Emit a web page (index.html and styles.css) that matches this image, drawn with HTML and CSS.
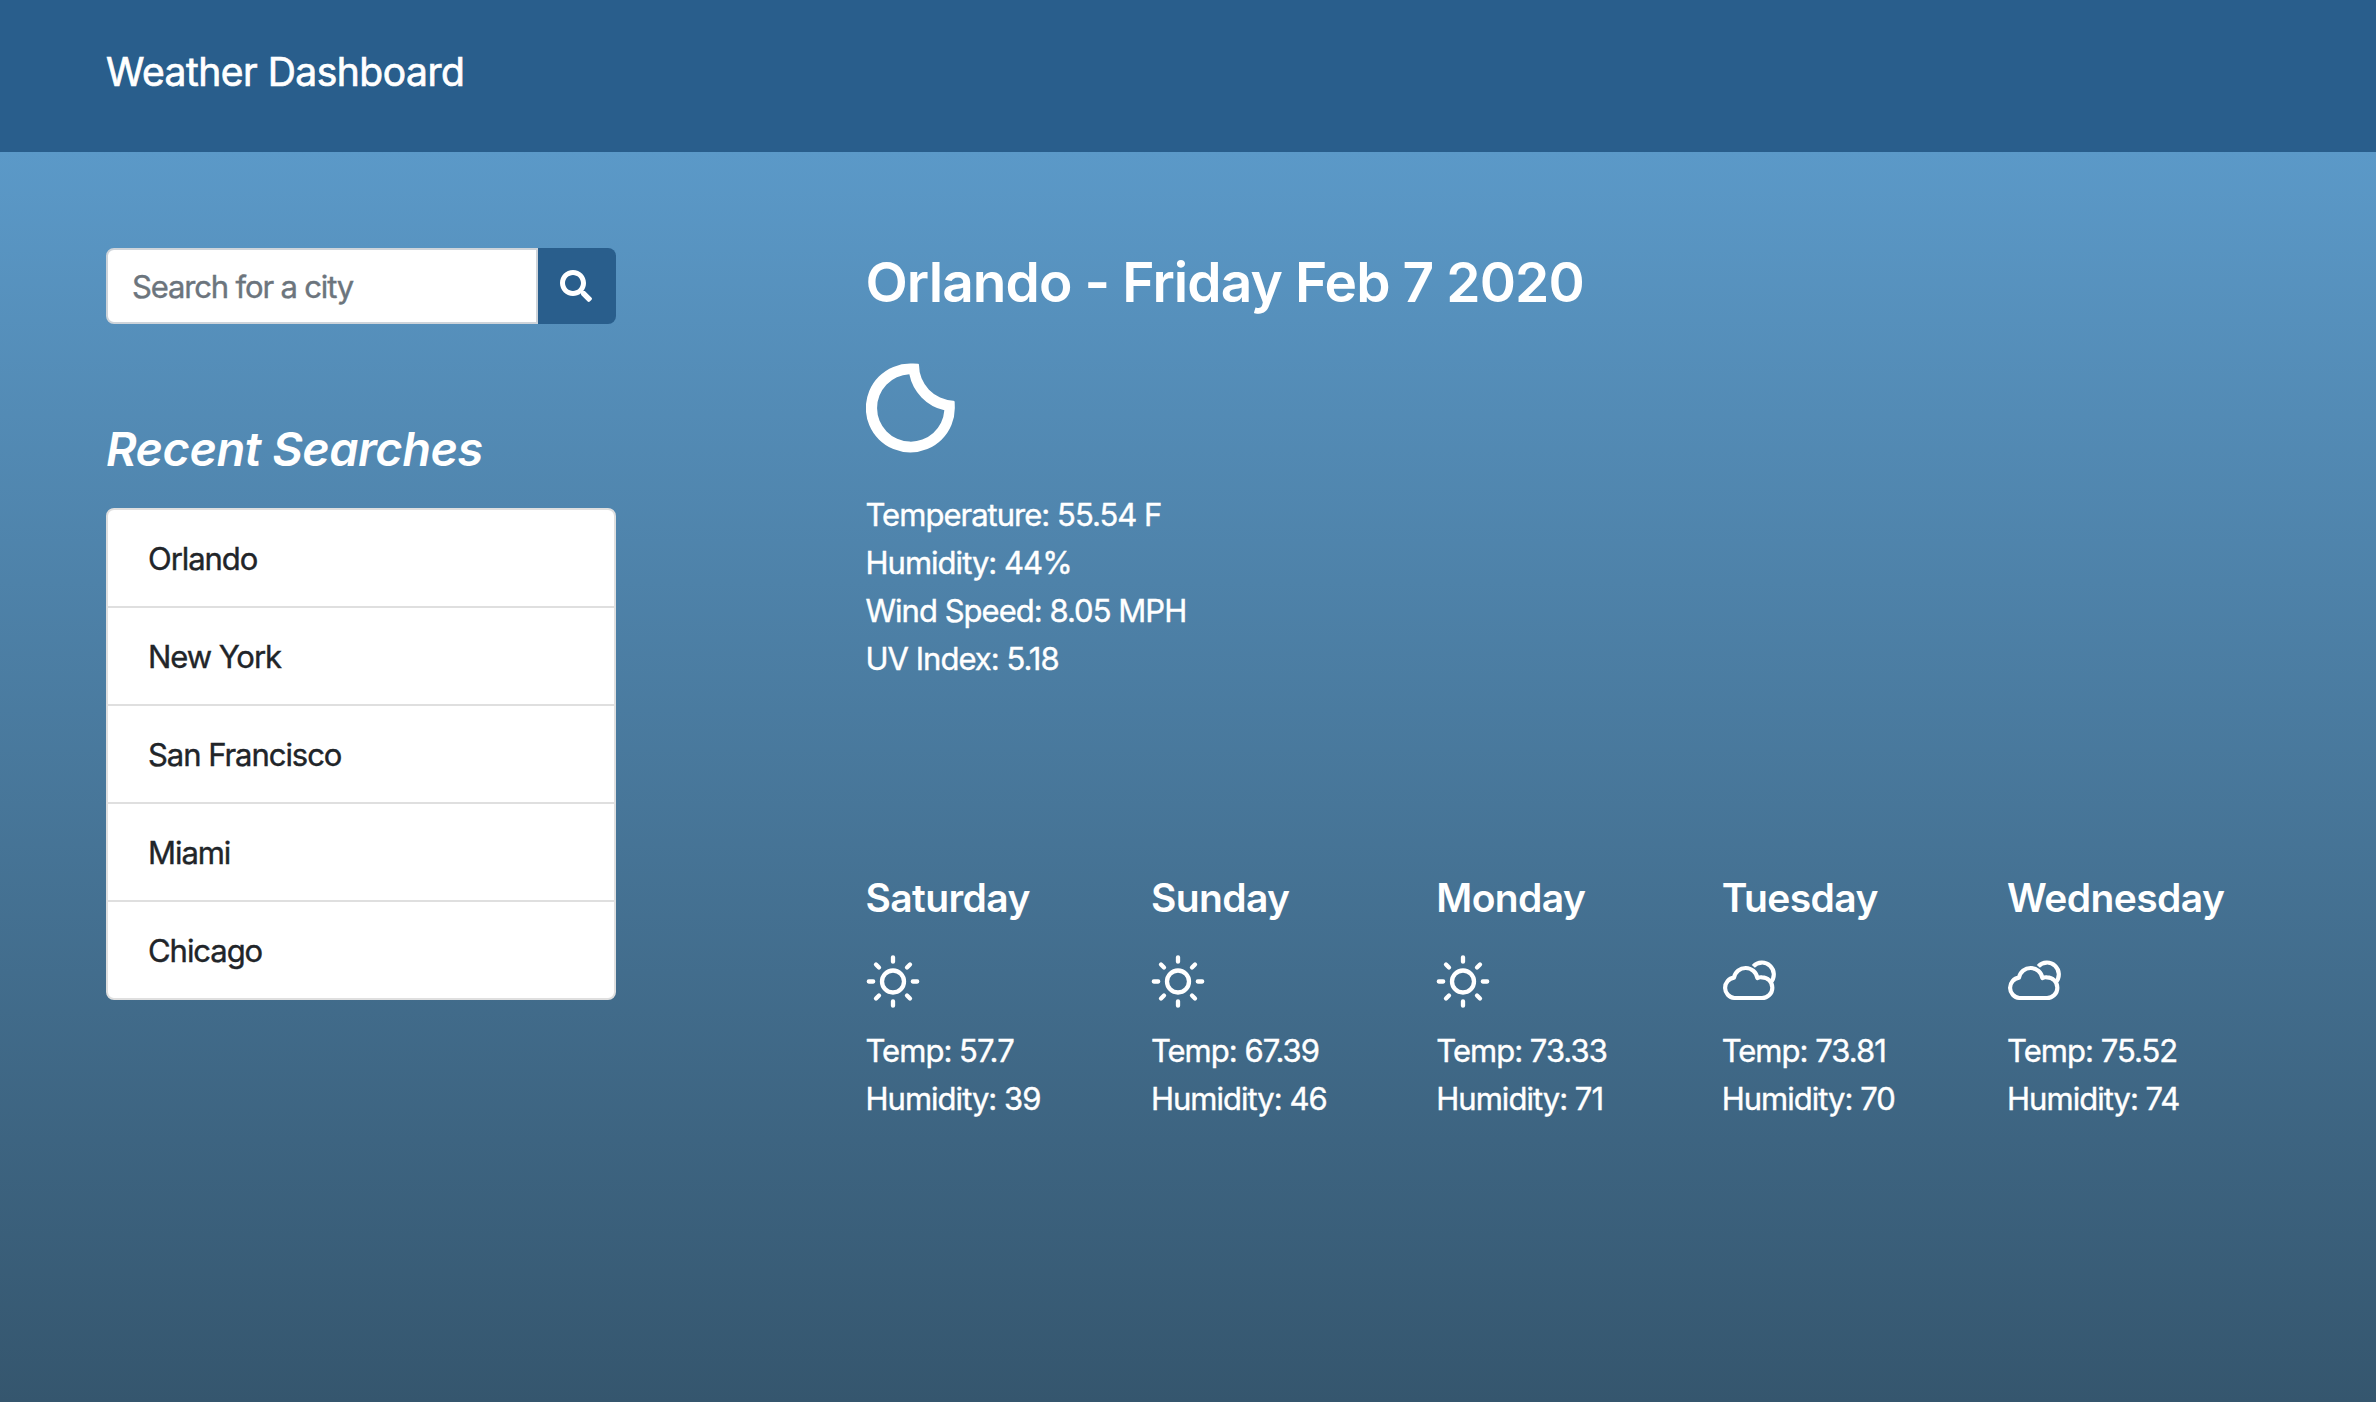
FILE: index.html
```html
<!DOCTYPE html>
<html lang="en">
<head>
  <meta charset="utf-8">
  <title>Weather Dashboard</title>
  <link rel="stylesheet" href="styles.css">
</head>
<body>
  <svg class="sprite" aria-hidden="true">
    <symbol id="sun" viewBox="-26.5 -26.5 53 53">
      <g fill="none" stroke="currentColor" stroke-width="4.3" stroke-linecap="round">
        <circle r="11"/>
        <path d="M0-24.2V-19.8M0 19.8V24.2M-24.2 0H-19.8M19.8 0H24.2M-17-17L-14-14M17-17L14-14M-17 17L-14 14M17 17L14 14"/>
      </g>
    </symbol>
    <symbol id="cloud" viewBox="36 15 162 159">
      <g fill="none" stroke="currentColor" stroke-width="12.500" stroke-linejoin="round">
        <path d="M156 144A31 31 0 0 0 156 82Q149 81 142 84A35.5 35.5 0 0 0 72 83A30.7 30.7 0 0 0 73 144Z"/>
        <path d="M130 49A35 35 0 1 1 182 97"/>
      </g>
    </symbol>
  </svg>

  <header class="navbar"><span class="brand">Weather Dashboard</span></header>

  <main class="content">
    <aside class="sidebar">
      <form class="search">
        <input class="search-input" type="text" placeholder="Search for a city" aria-label="City">
        <button class="search-button" type="button" aria-label="Search">
          <svg width="32" height="32" viewBox="0 0 512 512" fill="currentColor"><path d="M505 442.700L405.300 343c-4.500-4.500-10.600-7-17-7H372c27.600-35.300 44-79.700 44-128C416 93.100 322.900 0 208 0S0 93.100 0 208s93.100 208 208 208c48.300 0 92.700-16.400 128-44v16.300c0 6.400 2.500 12.500 7 17l99.700 99.700c9.400 9.400 24.600 9.400 33.900 0l28.300-28.300c9.400-9.400 9.400-24.600.1-34zM208 336c-70.700 0-128-57.200-128-128 0-70.700 57.200-128 128-128 70.700 0 128 57.200 128 128 0 70.700-57.200 128-128 128z"/></svg>
        </button>
      </form>
      <h3 class="recent-title">Recent Searches</h3>
      <ul class="recent-list">
        <li>Orlando</li>
        <li>New York</li>
        <li>San Francisco</li>
        <li>Miami</li>
        <li>Chicago</li>
      </ul>
    </aside>

    <section class="weather">
      <h2 class="city">Orlando - Friday Feb 7 2020</h2>
      <svg class="moon" viewBox="30 30 267 268" fill="currentColor" fill-rule="evenodd"><path d="M163 30.500Q176 30 186 31Q189 31 189 35A107 107 0 0 0 292 142Q296 142 296 146L296.500 164A133.500 133.500 0 1 1 163 30.500ZM160 63A139 139 0 0 0 265 171A101 101 0 1 1 160 63Z"/></svg>
      <div class="current">
        <div>Temperature: 55.54 F</div>
        <div>Humidity: 44%</div>
        <div>Wind Speed: 8.05 MPH</div>
        <div>UV Index: 5.18</div>
      </div>

      <div class="forecast">
        <article>
          <h4 class="day">Saturday</h4>
          <svg class="icon"><use href="#sun"/></svg>
          <div>Temp: 57.7</div>
          <div>Humidity: 39</div>
        </article>
        <article>
          <h4 class="day">Sunday</h4>
          <svg class="icon"><use href="#sun"/></svg>
          <div>Temp: 67.39</div>
          <div>Humidity: 46</div>
        </article>
        <article>
          <h4 class="day">Monday</h4>
          <svg class="icon"><use href="#sun"/></svg>
          <div>Temp: 73.33</div>
          <div>Humidity: 71</div>
        </article>
        <article>
          <h4 class="day">Tuesday</h4>
          <svg class="icon"><use href="#cloud"/></svg>
          <div>Temp: 73.81</div>
          <div>Humidity: 70</div>
        </article>
        <article>
          <h4 class="day">Wednesday</h4>
          <svg class="icon"><use href="#cloud"/></svg>
          <div>Temp: 75.52</div>
          <div>Humidity: 74</div>
        </article>
      </div>
    </section>
  </main>
</body>
</html>
```

FILE: styles.css
```css
* {
  box-sizing: border-box;
}

body {
  margin: 0;
  height: 1402px;
  display: flex;
  flex-direction: column;
  overflow: hidden;
  font: 400 31px/48px Inter, sans-serif;
  letter-spacing: -0.98px;
  color: #fff;
  -webkit-text-stroke: 0.4px;
}

h2, h3, h4, ul {
  margin: 0;
  padding: 0;
}

.sprite {
  display: none;
}

.navbar {
  flex: none;
  height: 152px;
  padding: 42px 106px 0;
  background: #295e8c;
}

.brand {
  display: block;
  font-size: 39px;
  line-height: 60px;
  letter-spacing: -0.5px;
  -webkit-text-stroke: 0.7px;
}

.content {
  flex: 1;
  display: flex;
  gap: 249.5px;
  padding: 96px 83px 0 106px;
  background: linear-gradient(#5b99c8, #35566e);
}

.sidebar {
  width: 510px;
  flex: none;
}

.search {
  display: flex;
  height: 76px;
  margin-bottom: 96px;
}

.search-input {
  width: 432px;
  padding: 1px 24px 0;
  border: 2px solid #ced4da;
  border-radius: 8px 0 0 8px;
  background: #fff;
  color: #495057;
  font: inherit;
  letter-spacing: -1.15px;
}

.search-input::placeholder {
  color: #6c757d;
  opacity: 1;
}

.search-button {
  flex: 1;
  display: flex;
  align-items: center;
  justify-content: center;
  padding: 0 2px 0 0;
  border: 0;
  border-radius: 0 8px 8px 0;
  background: #295e8c;
  color: #fff;
}

.recent-title {
  margin-bottom: 30px;
  font-size: 47px;
  font-style: italic;
  font-weight: 600;
  line-height: 58px;
  letter-spacing: -0.5px;
  -webkit-text-stroke: 0;
}

.recent-list {
  list-style: none;
  border: 2px solid #dfdfdf;
  border-radius: 8px;
  background: #fff;
  color: #212529;
  letter-spacing: -1.05px;
}

.recent-list li {
  padding: 25px 40px 23px;
}

.recent-list li + li {
  border-top: 2px solid #dfdfdf;
}

.weather {
  flex: 1;
}

.city {
  padding-top: 1px;
  font-size: 55px;
  font-weight: 600;
  line-height: 67px;
  letter-spacing: -0.9px;
  -webkit-text-stroke: 0;
}

.moon {
  display: block;
  width: 89px;
  height: 90px;
  margin: 47px 0 38px;
}

.forecast {
  display: grid;
  grid-template-columns: repeat(5, 285.4px);
  margin-top: 191px;
}

.day {
  font-size: 39px;
  font-weight: 600;
  line-height: 48px;
  letter-spacing: -0.6px;
  -webkit-text-stroke: 0;
}

.icon {
  display: block;
  width: 54px;
  height: 53px;
  margin: 33px 0 19px;
}
```
